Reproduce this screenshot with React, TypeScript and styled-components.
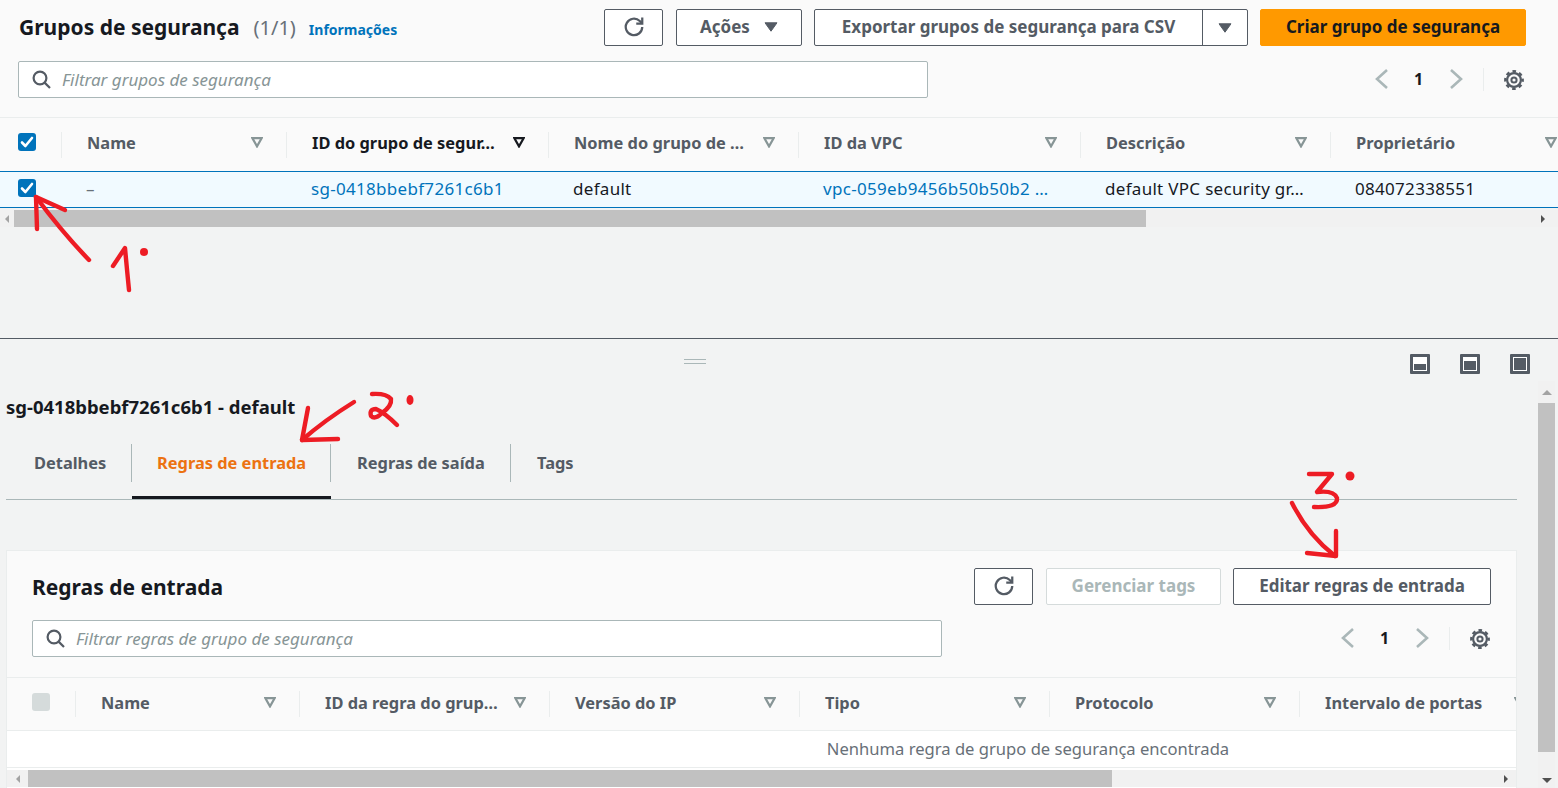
import styled, { createGlobalStyle } from "styled-components";

const GlobalStyle = createGlobalStyle`
    html, body {
        margin: 0;
        background: #f2f3f3;
        font-family: "Noto Sans", "Open Sans", sans-serif;
        font-size: 16px;
        color: #16191f;
    }
`;

const Page = styled.div`
    position: relative;
    width: 1558px;
    height: 788px;
    overflow: hidden;
    display: flex;
    flex-direction: column;
`;

const TopPanel = styled.section`
    height: 338px;
    flex-shrink: 0;
`;

const Toolbar = styled.div<{ $left: number; $right: number; $top: number; $bottom: number }>`
    display: flex;
    flex-direction: column;
    gap: 15px;
    padding: ${p => `${p.$top}px ${p.$right}px ${p.$bottom}px ${p.$left}px`};
    background: #fafafa;
    border-bottom: 1px solid #eaeded;
`;

const ToolbarRow = styled.div`
    display: flex;
    align-items: center;
    height: 37px;
`;

const PageTitle = styled.h1`
    margin: 0 0 0 1px;
    font-size: 21px;
    font-weight: 700;
    line-height: 37px;
    color: #16191f;
    white-space: nowrap;
    span {
        font-size: 20px;
        font-weight: 400;
        color: #687078;
        margin-left: 14px;
    }
`;

const InfoLink = styled.a`
    margin: 3px 0 0 13px;
    font-size: 14px;
    font-weight: 700;
    color: #0073bb;
`;

const SectionTitle = styled.h2`
    margin: 0;
    font-size: 21px;
    font-weight: 700;
    color: #16191f;
    white-space: nowrap;
`;

const Actions = styled.div<{ $overhang: number }>`
    display: flex;
    gap: 12px;
    margin-left: auto;
    margin-right: -${p => p.$overhang}px;
`;

const Button = styled.button<{ $width: number }>`
    display: flex;
    align-items: center;
    justify-content: center;
    gap: 14px;
    box-sizing: border-box;
    width: ${p => p.$width}px;
    height: 37px;
    padding: 0 0 2px;
    background: #fff;
    border: 1px solid #545b64;
    border-radius: 2px;
    color: #545b64;
    font: 700 17px "Noto Sans", sans-serif;
    white-space: nowrap;
`;

const RefreshButton = styled(Button)`
    margin-right: 1px;
`;

const DisabledButton = styled(Button)`
    border-color: #d5dbdb;
    color: #aab7b8;
`;

const PrimaryButton = styled(Button)`
    background: #ff9900;
    border-color: #ff9900;
    color: #16191f;
`;

const SplitButton = styled.div`
    display: flex;
    box-sizing: border-box;
    height: 37px;
    background: #fff;
    border: 1px solid #545b64;
    border-radius: 2px;
    color: #545b64;
    font-size: 17px;
    font-weight: 700;
`;

const SplitLabel = styled.div`
    width: 387px;
    line-height: 33px;
    text-align: center;
    white-space: nowrap;
    border-right: 1px solid #545b64;
`;

const SplitCaret = styled.div`
    display: flex;
    align-items: center;
    justify-content: center;
    width: 44px;
`;

const FilterBox = styled.div`
    display: flex;
    align-items: center;
    gap: 11px;
    box-sizing: border-box;
    width: 910px;
    height: 37px;
    padding: 0 0 1px 13px;
    background: #fff;
    border: 1px solid #aab7b8;
    border-radius: 2px;
    font-size: 17px;
    font-style: italic;
    color: #879596;
    white-space: nowrap;
`;

const Pager = styled.div`
    display: flex;
    align-items: stretch;
    margin-left: auto;
`;

const PagerSlot = styled.div`
    display: flex;
    align-items: center;
    justify-content: center;
    width: 37px;
    padding-bottom: 1px;
    font-weight: 700;
    color: #16191f;
`;

const PagerSettings = styled.div`
    display: flex;
    align-items: center;
    margin-left: 9px;
    padding-left: 20px;
    border-left: 1px solid #eaeded;
`;

const HeaderRow = styled.div<{ $columns: string; $height: number }>`
    display: grid;
    grid-template-columns: ${p => p.$columns};
    align-items: center;
    height: ${p => p.$height}px;
    background: #fafafa;
`;

const CheckCell = styled.div<{ $inset: number; $separated?: boolean }>`
    display: flex;
    align-items: center;
    box-sizing: border-box;
    height: 26px;
    padding-left: ${p => p.$inset}px;
    padding-bottom: ${p => (p.$separated ? 2 : 0)}px;
    border-right: ${p => (p.$separated ? "1px solid #eaeded" : "0")};
`;

const HeaderCell = styled.div<{ $sorted?: boolean }>`
    display: flex;
    align-items: center;
    justify-content: space-between;
    box-sizing: border-box;
    height: 26px;
    padding: 0 23px 4px 25px;
    border-right: 1px solid #eaeded;
    font-size: 16.4px;
    font-weight: 700;
    color: ${p => (p.$sorted ? "#16191f" : "#545b64")};
    white-space: nowrap;
`;

const TableClip = styled.div`
    overflow: hidden;
`;

const SelectedRow = styled.div<{ $columns: string }>`
    display: grid;
    grid-template-columns: ${p => p.$columns};
    align-items: center;
    box-sizing: border-box;
    height: 37px;
    background: #f1faff;
    border-top: 1px solid #0073bb;
    border-bottom: 1px solid #0073bb;
`;

const DataCell = styled.div`
    padding: 0 0 2px 24px;
    font-size: 17px;
    letter-spacing: 0.3px;
    white-space: nowrap;
    color: #16191f;
`;

const LinkCell = styled(DataCell)`
    color: #0073bb;
`;

const DashCell = styled(DataCell)`
    color: #687078;
`;

const Checkbox = styled.span<{ $disabled?: boolean }>`
    display: flex;
    align-items: center;
    justify-content: center;
    width: 18px;
    height: 18px;
    margin-bottom: 3px;
    border-radius: 3px;
    background: ${p => (p.$disabled ? "#d5dbdb" : "#0073bb")};
`;

const HScroll = styled.div<{ $lead: number; $trail: number }>`
    display: flex;
    align-items: center;
    height: 17px;
    margin-top: 2px;
    padding-right: ${p => p.$trail}px;
    background: #f1f1f1;
    > :first-child {
        width: ${p => p.$lead}px;
    }
`;

const ScrollLeft = styled.div`
    display: flex;
    justify-content: center;
    flex-shrink: 0;
    &::before {
        content: "";
        border: 4px solid transparent;
        border-left: 0;
        border-right: 4px solid #a3a3a3;
    }
`;

const ScrollRight = styled.div`
    margin-left: auto;
    border: 4px solid transparent;
    border-right: 0;
    border-left: 4px solid #505050;
`;

const HThumb = styled.div<{ $width: number }>`
    width: ${p => p.$width}px;
    height: 17px;
    background: #c1c1c1;
`;

const SplitPanel = styled.section`
    flex: 1;
    min-height: 0;
    display: flex;
    flex-direction: column;
    border-top: 1px solid #545b64;
`;

const SplitHeader = styled.div`
    display: flex;
    align-items: center;
    height: 44px;
    flex-shrink: 0;
    padding: 0 28px 0 684px;
`;

const DragHandle = styled.div`
    width: 22px;
    height: 3px;
    margin-top: 1px;
    border-top: 1px solid #aab7b8;
    border-bottom: 1px solid #aab7b8;
`;

const LayoutIcons = styled.div`
    display: flex;
    gap: 30px;
    margin-left: auto;
    margin-top: 6px;
`;

const LayoutIcon = styled.span<{ $fill: number }>`
    display: flex;
    align-items: flex-end;
    box-sizing: border-box;
    width: 20px;
    height: 20px;
    padding: 1px;
    background: #fff;
    border: 3px solid #545b64;
    border-radius: 1px;
    &::after {
        content: "";
        flex: 1;
        height: ${p => p.$fill}px;
        background: #545b64;
    }
`;

const SplitBody = styled.div`
    flex: 1;
    min-height: 0;
    display: flex;
`;

const SplitContent = styled.div`
    box-sizing: border-box;
    width: 1511px;
    margin: 0 21px 0 6px;
    display: flex;
    flex-direction: column;
    min-height: 0;
`;

const DetailTitle = styled.div`
    margin-top: 12px;
    font-size: 18.5px;
    font-weight: 700;
    line-height: 24px;
    color: #16191f;
`;

const TabList = styled.div`
    display: flex;
    box-sizing: border-box;
    height: 56px;
    margin-top: 25px;
    padding-left: 2px;
    border-bottom: 1px solid #aab7b8;
`;

const Tab = styled.div<{ $active?: boolean; $width: number }>`
    box-sizing: border-box;
    width: ${p => p.$width}px;
    height: 55px;
    padding-left: ${p => (p.$active ? 25 : 26)}px;
    border-bottom: 3px solid ${p => (p.$active ? "#16191f" : "transparent")};
    font-size: 16.4px;
    font-weight: 700;
    line-height: 38px;
    color: ${p => (p.$active ? "#ec7211" : "#545b64")};
    white-space: nowrap;
`;

const TabLabel = styled.div<{ $last?: boolean }>`
    height: 38px;
    border-right: ${p => (p.$last ? "0" : "1px solid #aab7b8")};
`;

const Card = styled.div`
    flex: 1;
    min-height: 0;
    margin-top: 50px;
    display: flex;
    flex-direction: column;
    background: #fff;
    border: 1px solid #eaeded;
    border-bottom: 0;
`;

const EmptyRow = styled.div`
    width: 2042px;
    height: 36px;
    line-height: 36px;
    font-size: 16.6px;
    text-align: center;
    color: #687078;
    background: #fff;
    border-top: 1px solid #eaeded;
    border-bottom: 1px solid #eaeded;
`;

const VScroll = styled.div`
    display: flex;
    flex-direction: column;
    align-items: center;
    width: 17px;
    margin-top: -2px;
    background: #f1f1f1;
`;

const VArrow = styled.div<{ $up?: boolean }>`
    flex-shrink: 0;
    margin: ${p => (p.$up ? "9px 0 8px" : "auto 0 5px")};
    border: 5px solid transparent;
    border-top: ${p => (p.$up ? "0" : "5px solid #505050")};
    border-bottom: ${p => (p.$up ? "5px solid #a3a3a3" : "0")};
`;

const VThumb = styled.div`
    width: 17px;
    height: 349px;
    background: #c1c1c1;
`;

const Annotations = styled.svg`
    position: absolute;
    inset: 0;
    pointer-events: none;
    fill: none;
    stroke: #ed1c24;
    stroke-width: 4.4;
    stroke-linecap: round;
    stroke-linejoin: round;
`;

const AnnotationDot = styled.ellipse`
    fill: #ed1c24;
    stroke: none;
`;

const RefreshIcon = () => (
    <svg width="20" height="20" viewBox="0 0 16 16" fill="none" stroke="#545b64" strokeWidth="1.8">
        <path d="M14.6 8a6.6 6.6 0 1 1-2-4.8l1.9 1.9" />
        <path d="M9.8 5.2h4.8V.4" />
    </svg>
);

const CaretDown = ({ color = "#545b64" }: { color?: string }) => (
    <svg width="14" height="10" viewBox="0 0 14 10">
        <path d="M1 .8h12L7 9.2z" fill={color} stroke={color} strokeLinejoin="round" />
    </svg>
);

const SearchIcon = () => (
    <svg width="19" height="19" viewBox="0 0 19 19" fill="none" stroke="#545b64" strokeWidth="2.2" style={{ flexShrink: 0 }}>
        <circle cx="8" cy="8" r="6.4" />
        <path d="M12.6 12.6l5.4 5.4" />
    </svg>
);

const FilterCaret = ({ sorted }: { sorted?: boolean }) => (
    <svg width="12" height="11" viewBox="0 0 12 11" fill="none" stroke={sorted ? "#16191f" : "#879596"} strokeWidth="2.2" style={{ flexShrink: 0 }}>
        <path d="M1.4 1.2h9.2L6 9.4z" />
    </svg>
);

const Chevron = ({ right }: { right?: boolean }) => (
    <svg width="14" height="20" viewBox="0 0 14 20" fill="none" stroke="#aab7b8" strokeWidth="2.6">
        <path d={right ? "M2 1l10 9-10 9" : "M12 1L2 10l10 9"} />
    </svg>
);

const GearIcon = () => (
    <svg width="20" height="20" viewBox="0 0 20 20" fill="none" stroke="#545b64">
        <circle cx="10" cy="10" r="8.7" strokeWidth="2.4" strokeDasharray="3.6 3.23" strokeDashoffset="1.8" />
        <circle cx="10" cy="10" r="6.9" strokeWidth="2.2" />
        <circle cx="10" cy="10" r="2.6" strokeWidth="2" />
    </svg>
);

const CheckMark = () => (
    <svg width="14" height="12" viewBox="0 0 14 12" fill="none" stroke="#fff" strokeWidth="2.6" strokeLinecap="round" strokeLinejoin="round">
        <path d="M2 6.5l3.4 3.5L12 2" />
    </svg>
);

const PagerBlock = () => (
    <Pager>
        <PagerSlot><Chevron /></PagerSlot>
        <PagerSlot>1</PagerSlot>
        <PagerSlot><Chevron right /></PagerSlot>
        <PagerSettings><GearIcon /></PagerSettings>
    </Pager>
);

const groupColumns = "62px 225px 262px 250px 282px 250px 250px";
const ruleColumns = "69px 224px 250px 250px 250px 250px 250px";

const groupHeaders = [
    { label: "Name" },
    { label: "ID do grupo de segur…", sorted: true },
    { label: "Nome do grupo de …" },
    { label: "ID da VPC" },
    { label: "Descrição" },
    { label: "Proprietário" },
];

const ruleHeaders = ["Name", "ID da regra do grup…", "Versão do IP", "Tipo", "Protocolo", "Intervalo de portas"];

const tabs = [
    { label: "Detalhes", width: 124 },
    { label: "Regras de entrada", width: 199, active: true },
    { label: "Regras de saída", width: 180 },
    { label: "Tags", width: 100, last: true },
];

export default function App() {
    return <Page>
        <GlobalStyle />
        <TopPanel>
            <Toolbar $top={9} $right={34} $bottom={19} $left={18}>
                <ToolbarRow>
                    <PageTitle>Grupos de segurança<span>(1/1)</span></PageTitle>
                    <InfoLink>Informações</InfoLink>
                    <Actions $overhang={2}>
                        <RefreshButton $width={59}><RefreshIcon /></RefreshButton>
                        <Button $width={126}>Ações <CaretDown /></Button>
                        <SplitButton>
                            <SplitLabel>Exportar grupos de segurança para CSV</SplitLabel>
                            <SplitCaret><CaretDown /></SplitCaret>
                        </SplitButton>
                        <PrimaryButton $width={266}>Criar grupo de segurança</PrimaryButton>
                    </Actions>
                </ToolbarRow>
                <ToolbarRow>
                    <FilterBox><SearchIcon />Filtrar grupos de segurança</FilterBox>
                    <PagerBlock />
                </ToolbarRow>
            </Toolbar>
            <TableClip>
                <HeaderRow $columns={groupColumns} $height={53}>
                    <CheckCell $inset={18} $separated><Checkbox><CheckMark /></Checkbox></CheckCell>
                    {groupHeaders.map(({ label, sorted }) => <HeaderCell key={label} $sorted={sorted}>
                        {label}<FilterCaret sorted={sorted} />
                    </HeaderCell>)}
                </HeaderRow>
                <SelectedRow $columns={groupColumns}>
                    <CheckCell $inset={18}><Checkbox><CheckMark /></Checkbox></CheckCell>
                    <DashCell>–</DashCell>
                    <LinkCell>sg-0418bbebf7261c6b1</LinkCell>
                    <DataCell>default</DataCell>
                    <LinkCell>vpc-059eb9456b50b50b2 …</LinkCell>
                    <DataCell>default VPC security gr…</DataCell>
                    <DataCell>084072338551</DataCell>
                </SelectedRow>
            </TableClip>
            <HScroll $lead={14} $trail={13}>
                <ScrollLeft />
                <HThumb $width={1132} />
                <ScrollRight />
            </HScroll>
        </TopPanel>
        <SplitPanel>
            <SplitHeader>
                <DragHandle />
                <LayoutIcons>
                    <LayoutIcon $fill={6} />
                    <LayoutIcon $fill={9} />
                    <LayoutIcon $fill={12} />
                </LayoutIcons>
            </SplitHeader>
            <SplitBody>
                <SplitContent>
                    <DetailTitle>sg-0418bbebf7261c6b1 - default</DetailTitle>
                    <TabList>
                        {tabs.map(({ label, width, active, last }) => <Tab key={label} $width={width} $active={active}>
                            <TabLabel $last={last}>{label}</TabLabel>
                        </Tab>)}
                    </TabList>
                    <Card>
                        <Toolbar $top={17} $right={26} $bottom={20} $left={25}>
                            <ToolbarRow>
                                <SectionTitle>Regras de entrada</SectionTitle>
                                <Actions $overhang={1}>
                                    <RefreshButton $width={59}><RefreshIcon /></RefreshButton>
                                    <DisabledButton $width={175}>Gerenciar tags</DisabledButton>
                                    <Button $width={258}>Editar regras de entrada</Button>
                                </Actions>
                            </ToolbarRow>
                            <ToolbarRow>
                                <FilterBox><SearchIcon />Filtrar regras de grupo de segurança</FilterBox>
                                <PagerBlock />
                            </ToolbarRow>
                        </Toolbar>
                        <TableClip>
                            <HeaderRow $columns={ruleColumns} $height={52}>
                                <CheckCell $inset={25} $separated><Checkbox $disabled /></CheckCell>
                                {ruleHeaders.map(label => <HeaderCell key={label}>
                                    {label}<FilterCaret />
                                </HeaderCell>)}
                            </HeaderRow>
                            <EmptyRow>Nenhuma regra de grupo de segurança encontrada</EmptyRow>
                        </TableClip>
                        <HScroll $lead={21} $trail={8}>
                            <ScrollLeft />
                            <HThumb $width={1084} />
                            <ScrollRight />
                        </HScroll>
                    </Card>
                </SplitContent>
                <VScroll>
                    <VArrow $up />
                    <VThumb />
                    <VArrow />
                </VScroll>
            </SplitBody>
        </SplitPanel>
        <Annotations width="1558" height="788" viewBox="0 0 1558 788">
            <path d="M36 197Q62 232 89 260" />
            <path d="M37 229L36 197L65 210" />
            <path d="M113 266L125 248Q127 270 129 290" />
            <AnnotationDot cx="144" cy="252" rx="4" ry="4" />
            <path d="M354 402Q325 420 302 440" />
            <path d="M308 408L302 440L338 439" />
            <path d="M372 394Q386 393 391 399Q392 406 382 413Q375 420 371 416Q369 409 376 409Q385 413 397 425" />
            <AnnotationDot cx="410" cy="400" rx="3.5" ry="5" />
            <path d="M1309 474L1332 474L1317 492Q1334 490 1337 498Q1338 508 1314 507" />
            <AnnotationDot cx="1350" cy="476" rx="4.5" ry="4.5" />
            <path d="M1292 503Q1308 535 1335 556" />
            <path d="M1336 531L1336 556L1307 553" />
        </Annotations>
    </Page>;
}
